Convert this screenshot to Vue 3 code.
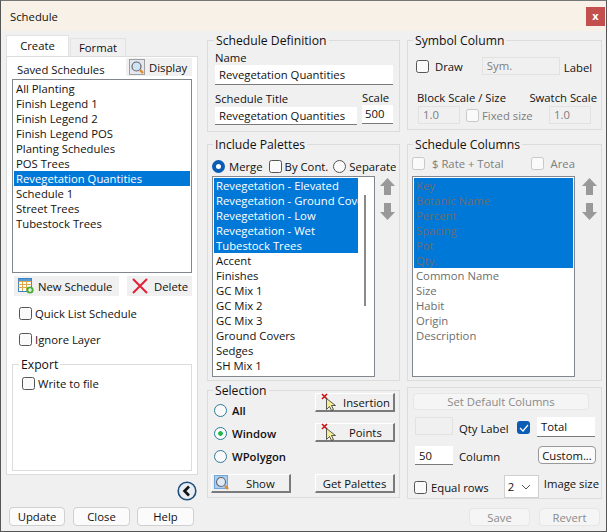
<script setup>
const saved = ['All Planting','Finish Legend 1','Finish Legend 2','Finish Legend POS','Planting Schedules','POS Trees','Revegetation Quantities','Schedule 1','Street Trees','Tubestock Trees']
const palettes = ['Revegetation - Elevated','Revegetation - Ground Covers','Revegetation - Low','Revegetation - Wet','Tubestock Trees','Accent','Finishes','GC Mix 1','GC Mix 2','GC Mix 3','Ground Covers','Sedges','SH Mix 1']
const columns = ['Key','Botanic Name','Percent','Spacing','Pot','Qty.','Common Name','Size','Habit','Origin','Description']
</script>

<template>
  <div class="window">
    <header class="titlebar">
      <span>Schedule</span>
      <button class="close">x</button>
    </header>
    <main class="body">
      <section class="col left">
        <div class="tabs">
          <div class="tab active">Create</div>
          <div class="tab">Format</div>
        </div>
        <div class="tabpanel">
          <div class="saved-head">
            <span class="saved-title">Saved Schedules</span>
            <div class="flatbtn display">
              <svg width="16" height="16" viewBox="0 0 16 16"><rect x=".5" y=".5" width="15" height="15" fill="#e4e8ee" stroke="#555" stroke-dasharray="1 1"/><circle cx="7.5" cy="7.5" r="4.5" fill="#cfe3f6" stroke="#666" stroke-width="1.2"/><path d="M11 11l3 3" stroke="#e08a2c" stroke-width="2.4"/></svg>
              <span>Display</span>
            </div>
          </div>
          <ul class="list saved">
            <li v-for="s in saved" :key="s" :class="{ sel: s === 'Revegetation Quantities' }">{{ s }}</li>
          </ul>
          <div class="flatrow">
            <div class="flatbtn new">
              <svg width="16" height="16" viewBox="0 0 16 16"><rect x=".5" y=".5" width="13" height="13" fill="#fff" stroke="#3f82c4"/><path d="M.5 3.5h13M.5 6.5h13M.5 9.5h13M4.5 1v12M8.5 1v12" stroke="#e0a94a"/><rect x="1" y="1" width="12" height="2" fill="#5b9bd5"/><circle cx="12" cy="12" r="3.6" fill="#4caf3a"/><path d="M10 12h4M12 10v4" stroke="#fff" stroke-width="1.2"/></svg>
              <span>New Schedule</span>
            </div>
            <div class="flatbtn del">
              <svg width="16" height="16" viewBox="0 0 16 16"><path d="M1 1l14 14M15 1L1 15" stroke="#e2203a" stroke-width="2"/></svg>
              <span>Delete</span>
            </div>
          </div>
          <label class="check qls"><i class="box"></i>Quick List Schedule</label>
          <label class="check ign"><i class="box"></i>Ignore Layer</label>
          <fieldset class="group export">
            <legend>Export</legend>
            <label class="check"><i class="box"></i>Write to file</label>
          </fieldset>
        </div>
        <div class="backrow">
          <svg width="20" height="20" viewBox="0 0 20 20"><circle cx="10" cy="10" r="8.8" fill="#e8eef4" stroke="#1f4e79" stroke-width="1.6"/><path d="M12 5.5L7.5 10l4.500 4.500" fill="none" stroke="#111" stroke-width="2.600"/></svg>
        </div>
        <div class="footer-left">
          <button class="win update">Update</button>
          <button class="win closeb">Close</button>
          <button class="win help">Help</button>
        </div>
      </section>

      <section class="col mid">
        <fieldset class="group def">
          <legend>Schedule Definition</legend>
          <div class="lbl">Name</div>
          <div class="input full">Revegetation Quantities</div>
          <div class="titlerow">
            <div class="stack grow">
              <div class="lbl">Schedule Title</div>
              <div class="input">Revegetation Quantities</div>
            </div>
            <div class="stack scale">
              <div class="lbl">Scale</div>
              <div class="input">500</div>
            </div>
          </div>
        </fieldset>

        <fieldset class="group pal">
          <legend>Include Palettes</legend>
          <div class="radios">
            <label class="radio on merge"><i class="dot"></i>Merge</label>
            <label class="check cont"><i class="box"></i>By Cont.</label>
            <label class="radio sep"><i class="dot"></i>Separate</label>
          </div>
          <div class="listrow">
            <div class="list tall palette">
              <ul>
                <li v-for="(p, i) in palettes" :key="p" :class="{ sel: i < 5 }">{{ p }}</li>
              </ul>
              <div class="track"><div class="thumb"></div></div>
            </div>
            <div class="arrows">
              <svg width="15" height="17" viewBox="0 0 15 17"><path d="M7.500 0L15 8h-4v9H4V8H0z" fill="#999"/></svg>
              <svg width="15" height="17" viewBox="0 0 15 17"><path d="M7.500 17L15 9h-4V0H4v9H0z" fill="#999"/></svg>
            </div>
          </div>
        </fieldset>

        <fieldset class="group sel-group">
          <legend>Selection</legend>
          <div class="sel-grid">
            <div class="sel-opts">
              <label class="radio blue"><i class="dot"></i><b>All</b></label>
              <label class="radio blue green"><i class="dot"></i><b>Window</b></label>
              <label class="radio blue"><i class="dot"></i><b>WPolygon</b></label>
            </div>
            <div class="sel-picks">
              <button class="raised pick">
                <svg width="16" height="18" viewBox="0 0 16 18"><path d="M1 1l5 5M6 1L1 6" stroke="#d01010" stroke-width="1.600"/><path d="M5.500 5.500v11l3-3 2 4 2-1-2-4h4z" fill="#f4ec9a" stroke="#333" stroke-width=".8"/></svg>
                <span>Insertion</span>
              </button>
              <button class="raised pick">
                <svg width="16" height="18" viewBox="0 0 16 18"><path d="M1 1l5 5M6 1L1 6" stroke="#d01010" stroke-width="1.600"/><path d="M5.500 5.500v11l3-3 2 4 2-1-2-4h4z" fill="#f4ec9a" stroke="#333" stroke-width=".8"/></svg>
                <span class="pts">Points</span>
              </button>
            </div>
          </div>
          <div class="sel-bottom">
            <button class="raised show">
              <svg width="16" height="16" viewBox="0 0 16 16"><rect x=".5" y=".5" width="13" height="13" fill="#a9cdf2" stroke="#6fa6dc"/><circle cx="7" cy="7" r="4.500" fill="#dfe9f4" stroke="#666" stroke-width="1.100"/><path d="M11 11l3 3" stroke="#e08a2c" stroke-width="2.400"/></svg>
              <span>Show</span>
            </button>
            <button class="raised getp">Get Palettes</button>
          </div>
        </fieldset>
      </section>

      <section class="col right">
        <fieldset class="group sym">
          <legend>Symbol Column</legend>
          <div class="symrow">
            <label class="check dark"><i class="box"></i>Draw</label>
            <div class="input off symin">Sym.</div>
            <span class="symlbl">Label</span>
          </div>
          <div class="scalehead"><span>Block Scale / Size</span><span>Swatch Scale</span></div>
          <div class="scalerow">
            <div class="input off sm">1.0</div>
            <label class="check off fixed"><i class="box"></i>Fixed size</label>
            <div class="input off sm second">1.0</div>
          </div>
        </fieldset>

        <fieldset class="group cols">
          <legend>Schedule Columns</legend>
          <div class="colchecks">
            <label class="check off"><i class="box"></i>$ Rate + Total</label>
            <label class="check off"><i class="box"></i>Area</label>
          </div>
          <div class="listrow wide">
            <ul class="list tall colslist">
              <li v-for="(c, i) in columns" :key="c" :class="{ sel: i < 6 }">{{ c }}</li>
            </ul>
            <div class="arrows">
              <svg width="15" height="17" viewBox="0 0 15 17"><path d="M7.500 0L15 8h-4v9H4V8H0z" fill="#999"/></svg>
              <svg width="15" height="17" viewBox="0 0 15 17"><path d="M7.500 17L15 9h-4V0H4v9H0z" fill="#999"/></svg>
            </div>
          </div>
        </fieldset>

        <div class="group settings">
          <button class="win dis setdef">Set Default Columns</button>
          <div class="qtyrow">
            <div class="input off blank"></div>
            <span class="qtylbl">Qty Label</span>
            <i class="tick"><svg width="10" height="8" viewBox="0 0 10 8"><path d="M1 4l3 3 5-6" fill="none" stroke="#fff" stroke-width="1.200"/></svg></i>
            <div class="input total">Total</div>
          </div>
          <div class="colrow">
            <div class="input num">50</div>
            <span class="collbl">Column</span>
            <button class="win custom">Custom...</button>
          </div>
          <div class="eqrow">
            <label class="check dark"><i class="box"></i>Equal rows</label>
            <div class="combo"><span>2</span><svg width="10" height="6" viewBox="0 0 10 6"><path d="M1 1l4 4 4-4" fill="none" stroke="#555"/></svg></div>
            <span class="imgsize">Image size</span>
          </div>
        </div>
        <div class="footer-right">
          <button class="win dis save">Save</button>
          <button class="win dis revert">Revert</button>
        </div>
      </section>
    </main>
  </div>
</template>

<style>
html, body { margin: 0; background: #f0f0f0; }
</style>

<style scoped>
.window {
  width: 607px; height: 532px; box-sizing: border-box; overflow: hidden;
  background: #f0f0f0; color: #111; border: 1px solid #555; border-top-color: #777;
  font: 11.3px/15px "Open Sans", "Noto Sans", sans-serif;
}
.titlebar {
  height: 30px; background: #f8f1e7; display: flex; align-items: center; justify-content: space-between;
  padding: 0 1px 0 9px;
}
.close {
  width: 19px; height: 19px; border: 0; padding: 0 0 2px; background: #c44f4f; color: #fff;
  font: bold 11px/15px "Open Sans", sans-serif;
}
.body { display: grid; grid-template-columns: 192px 194px 194px; column-gap: 8px; padding-left: 5px; }
.body .mid { margin-left: 1px; }
.body .right { margin-left: -1px; }
.col { display: flex; flex-direction: column; }

.tabs { display: flex; height: 25px; align-items: flex-end; }
.tab { width: 56px; height: 18px; box-sizing: border-box; border: 1px solid #e2e2e2; border-bottom: 0; background: #f0f0f0; text-align: center; line-height: 17px; }
.tab.active { width: 63px; height: 21px; background: #fff; margin-right: 1px; line-height: 19px; }
.tabpanel { height: 419px; box-sizing: border-box; background: #fff; border: 1px solid #dcdcdc; padding: 0 5px; }
.saved-head { display: flex; justify-content: space-between; align-items: center; height: 22px; padding-left: 5px; }
.saved-title { padding-top: 2px; }
.flatbtn { display: flex; align-items: center; background: #f0f0f0; height: 20px; }
.display { width: 66px; gap: 4px; padding-left: 3px; box-sizing: border-box; height: 18px; margin-top: -2px; }
.list { margin: 0; padding: 1px 1px 2px; list-style: none; background: #fff; border: 1px solid #82878f; box-sizing: border-box; }
.list li { height: 15px; padding-left: 2px; white-space: nowrap; overflow: hidden; }
.sel { background: #0078d7; color: #fff; }
.saved { height: 194px; }
.flatrow { display: flex; justify-content: space-between; margin: 3px 0 0 2px; }
.flatrow .new { width: 105px; padding-left: 4px; gap: 4px; box-sizing: border-box; }
.flatrow .del { width: 65px; padding-left: 5px; gap: 6px; box-sizing: border-box; }
.check, .radio { display: flex; align-items: center; white-space: nowrap; }
.box { width: 11px; height: 11px; border: 1px solid #555; border-radius: 2.500px; background: #fafafa; margin-right: 3px; flex: none; }
.qls { margin: 10px 0 0 7px; }
.ign { margin: 11px 0 0 7px; }
.group { margin: 0; padding: 0; border: 1px solid #dcdcdc; box-sizing: border-box; min-width: 0; }
legend { padding: 0 2px; line-height: 15px; font-size: 12.2px; }
.export { height: 114px; margin-top: 10px; padding: 0 0 0 8px; background: #fff; }
.export legend { margin-left: -2px; }
.export .check { margin: 4px 0 0 1px; }
.backrow { height: 32px; display: flex; justify-content: flex-end; align-items: center; padding-right: 1px; box-sizing: border-box; }
.footer-left { display: flex; margin-left: 3px; }
.win {
  height: 19px; box-sizing: border-box; border: 1px solid #d0d0d0; border-radius: 4px; background: #fbfbfb;
  font: inherit; color: inherit; padding: 0;
}
.update { width: 56px; }
.closeb { width: 57px; margin: 0 7px 0 8px; }
.help { width: 57px; }

.def { height: 99px; margin-top: 2px; padding: 2px 6px 0 7px; }
.def legend { margin-left: -1px; }
.lbl { line-height: 15px; }
.input { height: 20px; box-sizing: border-box; background: #fff; border-bottom: 1px solid #7b7b7b; padding: 0 4px; line-height: 19px; white-space: nowrap; overflow: hidden; }
.titlerow { display: flex; justify-content: space-between; align-items: flex-end; margin-top: 5px; }
.stack { display: flex; flex-direction: column; }
.grow { width: 142px; }
.grow .lbl { height: 16px; }
.grow .input { height: 18px; line-height: 17px; }
.scale { width: 31px; margin-bottom: 1px; }
.scale .input { padding: 0 3px; height: 19px; line-height: 17px; }
.pal { height: 244px; margin-top: 5px; padding: 0 4px; }
.pal legend { margin-left: 1px; }
.radios { display: flex; height: 24px; box-sizing: border-box; align-items: center; padding-top: 4px; }
.dot { width: 11px; height: 11px; border-radius: 50%; border: 1px solid #555; background: #fafafa; margin-right: 4px; flex: none; box-sizing: content-box; }
.radio.on .dot { background: #fff; border: 4px solid #0a5cb5; width: 5px; height: 5px; }
.cont { margin-left: 6px; }
.sep { margin-left: 5px; }
.sep .dot { margin-right: 3px; }
.listrow { display: flex; gap: 5px; align-items: flex-start; }
.listrow.wide { gap: 7px; }
.tall { width: 166px; height: 201px; overflow: hidden; }
.palette { display: flex; }
.palette ul { margin: 0; padding: 0; list-style: none; width: 144px; flex: none; }
.track { flex: 1; position: relative; }
.thumb { position: absolute; right: 7px; top: 17px; width: 2px; height: 111px; background: #8a8a8a; }
.arrows { display: flex; flex-direction: column; gap: 8px; padding-top: 2px; }

.sel-group { height: 115px; margin-top: 2px; padding: 0 4px 0 3px; }
.sel-group legend { margin-left: 2px; }
.sel-grid { display: flex; justify-content: space-between; }
.sel-opts { display: flex; flex-direction: column; gap: 8px; padding-top: 5px; margin-left: 3px; }
.radio b { font-weight: 600; }
.blue .dot { border-color: #2b7a9e; margin-right: 5px; }
.green .dot { background: radial-gradient(circle, #1fb84a 0 2px, #fafafa 2.600px); }
.sel-picks { display: flex; flex-direction: column; gap: 11px; margin-top: -5px; }
.raised {
  width: 80px; height: 19px; box-sizing: border-box; font: inherit; color: inherit; padding: 0;
  background: #f0f0f0; border: 1px solid; border-color: #fff #7a7a7a #7a7a7a #fff; border-width: 1px 2px 2px 1px; display: flex; align-items: center; justify-content: center;
}
.pick { justify-content: flex-start; padding-left: 5px; }
.pick span { margin-left: 6px; }
.pick .pts { margin-left: 12px; }
.sel-bottom { display: flex; justify-content: space-between; margin-top: 10px; }
.show { justify-content: flex-start; padding-left: 2px; }
.show span { margin-left: 16px; }

.sym { height: 97px; margin-top: 2px; padding: 0 6px 0 9px; }
.sym legend { margin-left: -4px; }
.symrow { display: flex; align-items: center; margin-top: 9px; height: 18px; }
.dark { flex: none; }
.symrow .dark { margin-left: -1px; }
.symrow .dark .box { margin-right: 6px; }
.off { color: #7d7d7d; }
.off .box { border-color: #c8c8c8; }
.input.off { background: #f0f0f0; border: 1px solid #e2e2e2; line-height: 16px; }
.symin { width: 78px; margin-left: 19px; height: 18px; }
.symlbl { margin-left: 4px; padding-top: 3px; }
.scalehead { display: flex; justify-content: space-between; margin-top: 15px; margin-right: -2px; }
.scalerow { display: flex; align-items: center; margin-top: 1px; margin-left: 1px; }
.sm { width: 42px; height: 18px !important; }
.fixed { margin-left: 6px; }
.second { margin-left: auto; margin-right: 4px; }
.cols { height: 244px; margin-top: 7px; padding: 0 4px; }
.cols legend { margin-left: 1px; }
.colchecks { display: flex; height: 24px; box-sizing: border-box; align-items: center; gap: 27px; padding-bottom: 2px; }
.colchecks .box { margin-right: 7px; }
.colslist li { color: #6d6d6d; }

.settings { height: 112px; margin-top: 6px; padding: 5px 5px; }
.setdef { width: 176px; height: 17px; display: block; line-height: 15px; }
.dis { color: #8a8a8a; background: #f5f5f5; border-color: #e6e6e6; }
.qtyrow, .colrow, .eqrow { display: flex; white-space: nowrap; }
.qtyrow { margin-top: 7px; height: 20px; align-items: flex-start; }
.blank { width: 38px; margin-left: 2px; height: 18px; }
.qtylbl { margin-left: 6px; padding-top: 4px; width: 50px; flex: none; }
.tick { width: 13px; height: 13px; background: #0a5cb5; border-radius: 3px; margin: 4px 0 0 8px; display: flex; align-items: center; justify-content: center; }
.total { width: 58px; margin-left: 7px; }
.colrow { margin-top: 9px; height: 19px; align-items: flex-start; }
.num { width: 38px; margin-left: 2px; height: 19px; }
.collbl { margin-left: 6px; padding-top: 3px; }
.custom { width: 58px; margin-left: auto; height: 18px; border-color: #999; }
.eqrow { margin-top: 10px; height: 23px; align-items: center; }
.eqrow .dark { margin-left: 1px; padding-top: 1px; }
.eqrow .box { margin-right: 4px; }
.combo { width: 35px; height: 23px; box-sizing: border-box; border: 1px solid #d0d0d0; background: #fff; margin-left: auto; display: flex; align-items: center; justify-content: space-between; padding: 0 7px 0 3px; flex: none; }
.imgsize { margin: -6px -3px 0 5px; }
.footer-right { display: flex; justify-content: flex-end; gap: 9px; margin-top: 9px; padding-right: 2px; }
.save, .revert { width: 61px; height: 18px; }
</style>
